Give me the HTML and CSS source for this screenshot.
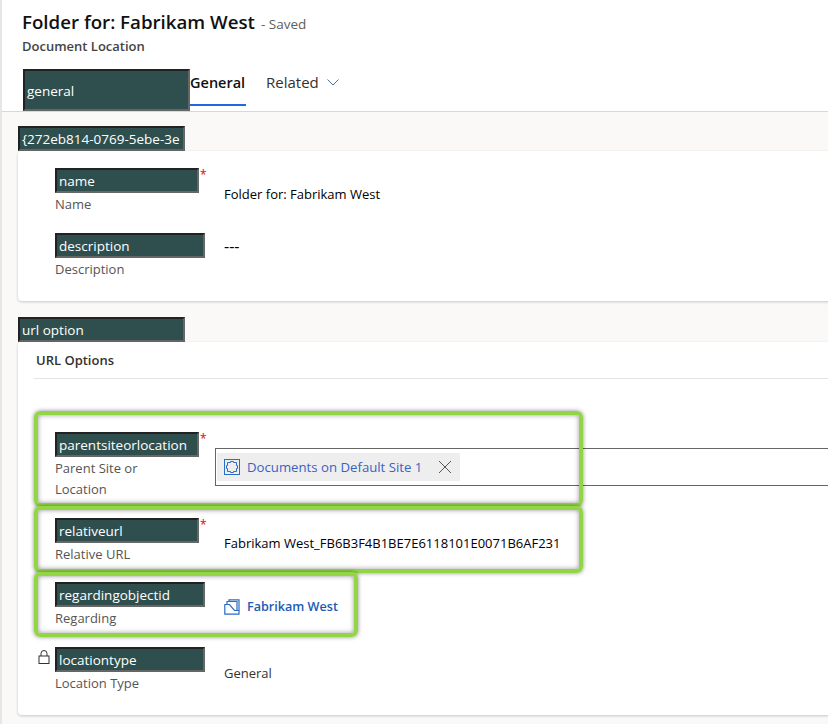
FILE: index.html
```html
<!DOCTYPE html>
<html>
	<head>
		<meta charset="UTF-8">
		<title>Folder for: Fabrikam West</title>
		<link rel="stylesheet" href="styles.css">
	</head>
	<body>
		<div class="page">
			<div class="header">
				<div class="title-row">
					<h1 class="title">Folder for: Fabrikam West</h1>
					<span class="saved">- Saved</span>
				</div>
				<div class="entity">Document Location</div>
				<div class="tabs">
					<div class="chip chip-tab">general</div>
					<div class="tab tab-active">General</div>
					<div class="tab tab-related">
						Related
						<svg width="12" height="7" viewBox="0 0 12 7"><path d="M.5.5 6 6l5.500-5.500" fill="none" stroke="#4a6f96"/></svg>
					</div>
				</div>
			</div>

			<div class="body">
				<div class="chip chip-section chip-guid">{272eb814-0769-5ebe-3e</div>
				<div class="card card-first">
					<div class="field">
						<div class="label-col">
							<div class="chip-line"><div class="chip chip-req">name</div><span class="req">*</span></div>
							<div class="label">Name</div>
						</div>
						<div class="value">Folder for: Fabrikam West</div>
					</div>
					<div class="field field-desc">
						<div class="label-col">
							<div class="chip-line"><div class="chip">description</div></div>
							<div class="label">Description</div>
						</div>
						<div class="value value-dash">---</div>
					</div>
				</div>

				<div class="chip chip-section">url option</div>
				<div class="card card-second">
					<div class="section-title">URL Options</div>
					<div class="field field-parent">
						<div class="label-col">
							<div class="chip-line"><div class="chip chip-req">parentsiteorlocation</div><span class="req">*</span></div>
							<div class="label label-wrap">Parent Site or Location</div>
						</div>
						<div class="lookup">
							<div class="lookup-item">
								<svg class="icon-site" width="16" height="16" viewBox="0 0 16 16" fill="none" stroke="#2b6cc4">
									<rect x=".5" y=".5" width="15" height="15"/>
									<path d="M3.500 3.500h3v-1h3v1h3v3h1v3h-1v3h-3v1h-3v-1h-3v-3h-1v-3h1z" stroke-linejoin="round"/>
								</svg>
								<span class="lookup-text">Documents on Default Site 1</span>
								<svg class="icon-x" width="14" height="14" viewBox="0 0 14 14"><path d="M1 1l12 12M13 1 1 13" stroke="#555" fill="none"/></svg>
							</div>
						</div>
					</div>
					<div class="field field-rel">
						<div class="label-col">
							<div class="chip-line"><div class="chip chip-req">relativeurl</div><span class="req">*</span></div>
							<div class="label">Relative URL</div>
						</div>
						<div class="value value-rel">Fabrikam West_FB6B3F4B1BE7E6118101E0071B6AF231</div>
					</div>
					<div class="field field-reg">
						<div class="label-col">
							<div class="chip-line"><div class="chip">regardingobjectid</div></div>
							<div class="label">Regarding</div>
						</div>
						<div class="value value-link">
							<svg width="16" height="16" viewBox="0 0 16 16" fill="none" stroke="#2b6cc4" stroke-width="1.200">
								<path d="M.8 5.500h4.700l5 6H15v3.700H.8z"/>
								<path d="M3 5.500v-3h10v9M5 2.500V.8h10v10.700"/>
							</svg>
							<span>Fabrikam West</span>
						</div>
					</div>
					<div class="field field-type">
						<svg class="icon-lock" width="12" height="14" viewBox="0 0 12 14" fill="none" stroke="#333">
							<rect x="1" y="6" width="10" height="7.500"/>
							<path d="M3 6V3.500a3 3 0 0 1 6 0V6"/>
						</svg>
						<div class="label-col">
							<div class="chip-line"><div class="chip">locationtype</div></div>
							<div class="label">Location Type</div>
						</div>
						<div class="value value-plain">General</div>
					</div>

					<div class="mark mark-parent"></div>
					<div class="mark mark-rel"></div>
					<div class="mark mark-reg"></div>
				</div>
			</div>
		</div>
	</body>
</html>
```

FILE: styles.css
```css
* {margin: 0; padding: 0; box-sizing: border-box;}
html, body {width: 828px; height: 724px; overflow: hidden;}
body {
	font-family: "Open Sans", "Noto Sans", sans-serif;
	font-size: 13px;
	color: #111;
	background: #faf9f8;
}
.page {
	height: 724px;
	border-left: 2px solid #e6e6e6;
}

/* header */
.header {
	height: 112px;
	background: #fff;
	border-bottom: 1px solid #d8d8d8;
	padding: 9px 0 0 20px;
}
.title-row {display: flex; align-items: baseline; height: 26px;}
.title {
	font-size: 18.700px;
	font-weight: 600;
	line-height: 26px;
	color: #111;
}
.saved {
	font-size: 13.500px;
	color: #605e5c;
	margin-left: 6px;
}
.entity {
	font-size: 13px;
	font-weight: 600;
	color: #444;
	line-height: 18px;
	margin-top: 2px;
}
.tabs {display: flex; height: 42px; margin-top: 14px; margin-left: 1px;}
.tab {font-size: 14.500px; line-height: 28px;}
.tab-active {
	font-weight: 600;
	width: 56px;
	height: 37px;
	border-bottom: 2px solid #2266e3;
	white-space: nowrap;
}
.tab-related {font-size: 15px; line-height: 26px; margin-left: 20px; display: flex; align-items: flex-start; gap: 8px; color: #323130;}
.tab-related svg {margin-top: 10px;}

/* debug chips */
.chip {
	background: #2f4f4f;
	color: #fff;
	width: 150px;
	height: 25px;
	line-height: 23px;
	padding-left: 2px;
	font-size: 13.500px;
	border-style: solid;
	border-width: 2px;
	border-color: #222 #666 #666 #222;
	white-space: nowrap;
	overflow: hidden;
}
.chip-req {width: 144px;}
.chip-tab {
	width: 167px;
	height: 42px;
	line-height: 40px;
}
.chip-section {width: 167px; margin-left: 16px;}
.chip-guid {margin-top: 14px;}

/* cards */
.card {
	position: relative;
	margin-left: 16px;
	width: 830px;
	background: #fff;
	border-radius: 4px;
	box-shadow: 0 1px 3px rgba(0, 0, 0, .2);
}
.card-first {height: 150px; margin-bottom: 16px; padding-top: 17px;}
.card-second {height: 373px;}
.section-title {
	margin: 0 0 0 16px;
	height: 37px;
	padding: 8px 0 0 2px;
	font-size: 13px;
	font-weight: 600;
	line-height: 20px;
	color: #323130;
	border-bottom: 1px solid #e4e4e4;
}

/* fields */
.field {display: flex; align-items: flex-start; padding-left: 37px; position: relative;}
.label-col {width: 169px; flex-shrink: 0;}
.chip-line {display: flex;}
.req {color: #e00; font-size: 12px; line-height: 14px; margin-left: 1px;}
.label {font-size: 13px; line-height: 21px; color: #555; margin-top: 1px;}
.label-wrap {width: 110px;}
.value {font-size: 13px; font-weight: 500; margin-top: 16px; line-height: 20px; color: #000;}
.value-dash {margin-top: 3px; font-size: 16px;}
.value-rel {margin-top: 15px;}
.value-plain {color: #333; margin-top: 16px;}
.value-link {display: flex; align-items: center; gap: 7px; color: #1b5bb5; font-weight: 600; font-size: 12.600px; margin-top: 15px;}
.field-desc {margin-top: 18px;}
.field-parent {margin-top: 53px; height: 86px;}
.field-rel {height: 64px;}
.field-reg {height: 65px;}
.icon-lock {position: absolute; left: 20px; top: 3px;}

/* lookup */
.lookup {
	margin: 16px 0 0 -9px;
	width: 640px;
	height: 38px;
	border: 1px solid #666;
	padding: 4px 0 0 1px;
}
.lookup-item {
	display: flex;
	align-items: center;
	width: 243px;
	height: 28px;
	background: #eee;
	padding-left: 7px;
}
.lookup-text {font-size: 13.200px; color: #3a62c4; margin-left: 7px; white-space: nowrap; width: 191px;}

/* green highlight boxes */
.mark {
	position: absolute;
	border: 4px solid #92d645;
	border-radius: 6px;
	box-shadow: 0 0 4px rgba(0, 0, 0, .45), inset 0 0 5px rgba(0, 0, 0, .4);
}
.mark-parent {left: 16px; top: 69px; width: 549px; height: 96px;}
.mark-rel {left: 16px; top: 164px; width: 549px; height: 67px;}
.mark-reg {left: 16px; top: 230px; width: 324px; height: 65px;}
```
